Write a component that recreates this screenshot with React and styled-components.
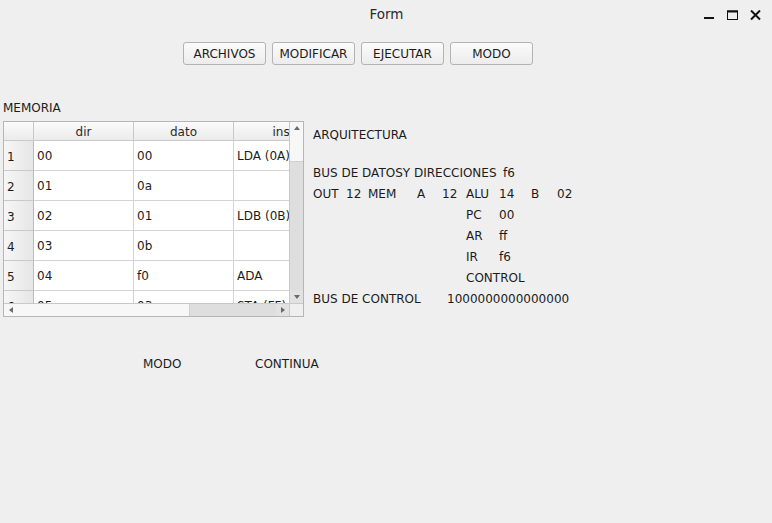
import React from 'react';
import styled, { createGlobalStyle } from 'styled-components';

const GlobalStyle = createGlobalStyle`
  html, body {
    margin: 0;
    padding: 0;
    background: #efefef;
  }
  body {
    font-family: "DejaVu Sans", "Liberation Sans", sans-serif;
    font-size: 12px;
    color: #1c1c1c;
  }
`;

const Window = styled.div`
  width: 772px;
  height: 523px;
  background: #efefef;
  display: flex;
  flex-direction: column;
  overflow: hidden;
`;

const TitleBar = styled.div`
  height: 28px;
  display: grid;
  grid-template-columns: 1fr auto 1fr;
  align-items: center;
`;

const Title = styled.div`
  grid-column: 2;
  font-size: 13.5px;
  color: #2a2a2a;
  padding-left: 1px;
`;

const WinControls = styled.div`
  justify-self: end;
  display: flex;
  align-items: center;
  gap: 12px;
  padding-right: 11px;
  padding-top: 2px;
`;

const Toolbar = styled.div`
  display: flex;
  gap: 6px;
  padding: 14px 0 0 183px;
`;

const Button = styled.button`
  width: 83px;
  height: 23px;
  box-sizing: border-box;
  border: 1px solid #b3b3b3;
  border-radius: 3px;
  background: linear-gradient(#fbfbfb, #ececec);
  font-family: inherit;
  font-size: 12px;
  color: #1c1c1c;
  padding: 0;
`;

const SectionLabel = styled.div`
  margin-top: 36px;
  padding-left: 3px;
  line-height: 14px;
`;

const MainRow = styled.div`
  display: flex;
  align-items: flex-start;
  gap: 9px;
  margin-top: 6px;
  padding-left: 3px;
`;

const TableFrame = styled.div`
  width: 301px;
  height: 196px;
  box-sizing: border-box;
  border: 1px solid #b6b6b6;
  background: #ffffff;
  display: grid;
  grid-template-columns: 285px 14px;
  grid-template-rows: 181px 13px;
`;

const Viewport = styled.div`
  overflow: hidden;
`;

const Grid = styled.div`
  display: grid;
  grid-template-columns: 30px 100px 100px 144px;
  grid-auto-rows: 30px;
  grid-template-rows: 19px;
  width: 374px;
`;

const HeadCell = styled.div`
  box-sizing: border-box;
  border-right: 1px solid #c9c9c9;
  border-bottom: 1px solid #c9c9c9;
  background: linear-gradient(#fbfbfb, #ebebeb);
  display: flex;
  align-items: center;
  justify-content: center;
  padding-top: 1px;
  color: #2a2a2a;
  white-space: nowrap;
`;

const RowHead = styled.div`
  box-sizing: border-box;
  border-right: 1px solid #bdbdbd;
  border-bottom: 1px solid #c9c9c9;
  background: linear-gradient(90deg, #f6f6f6, #e6e6e6);
  display: flex;
  align-items: center;
  padding: 3px 0 0 3px;
`;

const Cell = styled.div`
  box-sizing: border-box;
  border-right: 1px solid #d3d3d3;
  border-bottom: 1px solid #d3d3d3;
  display: flex;
  align-items: center;
  padding: 1px 0 0 3px;
  white-space: nowrap;
  overflow: hidden;
`;

const VScroll = styled.div`
  border-left: 1px solid #c9c9c9;
  display: grid;
  grid-template-rows: 12px 28px 1fr 12px;
  background: #dedede;
`;

const HScroll = styled.div`
  border-top: 1px solid #c9c9c9;
  display: grid;
  grid-template-columns: 13px 173px 1fr 13px;
  background: #dedede;
`;

const Arrow = styled.div`
  display: flex;
  align-items: center;
  justify-content: center;
  background: ${p => (p.$light ? '#f7f7f7' : '#e2e2e2')};
`;

const Thumb = styled.div`
  background: #f7f7f7;
  ${p => (p.$vertical ? 'border-bottom: 1px solid #d0d0d0;' : 'border-right: 1px solid #d0d0d0;')}
`;

const Corner = styled.div`
  border-top: 1px solid #c9c9c9;
  border-left: 1px solid #c9c9c9;
  background: #efefef;
`;

const Panel = styled.div`
  padding-top: 4px;
  display: flex;
  flex-direction: column;
`;

const Heading = styled.div`
  line-height: 21px;
  margin-bottom: 16px;
`;

const RegGrid = styled.div`
  display: grid;
  grid-template-columns: 33px 22px 49px 25px 24px 33px 32px 26px auto;
  grid-auto-rows: 21px;
  align-items: center;
  white-space: nowrap;
`;

const Wide = styled.div`
  grid-column: 1 / -1;
  display: flex;
`;

const WideLabel = styled.span`
  width: ${p => p.$w}px;
`;

const Reg = styled.span`
  grid-column: ${p => p.$col};
`;

const BottomRow = styled.div`
  display: grid;
  grid-template-columns: 112px auto;
  margin-top: 40px;
  padding-left: 143px;
  line-height: 14px;
`;

const Tri = ({ dir }) => {
  const pts = {
    up: '0,4 3,0 6,4',
    down: '0,0 6,0 3,4',
    left: '4,0 4,6 0,3',
    right: '0,0 4,3 0,6',
  }[dir];
  const vert = dir === 'up' || dir === 'down';
  return (
    <svg width={vert ? 6 : 4} height={vert ? 4 : 6}>
      <polygon points={pts} fill="#6a6a6a" />
    </svg>
  );
};

const rows = [
  ['00', '00', 'LDA (0A)'],
  ['01', '0a', ''],
  ['02', '01', 'LDB (0B)'],
  ['03', '0b', ''],
  ['04', 'f0', 'ADA'],
  ['05', '03', 'STA (FF)'],
];

export default function App() {
  return (
    <Window>
      <GlobalStyle />
      <TitleBar>
        <Title>Form</Title>
        <WinControls>
          <svg width="11" height="11" viewBox="0 0 11 11">
            <rect x="0" y="7" width="10" height="2" fill="#111" />
          </svg>
          <svg width="11" height="11" viewBox="0 0 11 11">
            <rect x="0.5" y="1" width="10" height="8.5" fill="none" stroke="#111" strokeWidth="1" />
            <rect x="0" y="0.5" width="11" height="2" fill="#111" />
          </svg>
          <svg width="11" height="11" viewBox="0 0 11 11">
            <path d="M1 0.5 L10 9.5 M10 0.5 L1 9.5" stroke="#111" strokeWidth="2" />
          </svg>
        </WinControls>
      </TitleBar>

      <Toolbar>
        <Button>ARCHIVOS</Button>
        <Button>MODIFICAR</Button>
        <Button>EJECUTAR</Button>
        <Button>MODO</Button>
      </Toolbar>

      <SectionLabel>MEMORIA</SectionLabel>

      <MainRow>
        <TableFrame>
          <Viewport>
            <Grid>
              <HeadCell />
              <HeadCell>dir</HeadCell>
              <HeadCell>dato</HeadCell>
              <HeadCell>instruccion</HeadCell>
              {rows.map((r, i) => (
                <React.Fragment key={i}>
                  <RowHead>{i + 1}</RowHead>
                  <Cell>{r[0]}</Cell>
                  <Cell>{r[1]}</Cell>
                  <Cell>{r[2]}</Cell>
                </React.Fragment>
              ))}
            </Grid>
          </Viewport>
          <VScroll>
            <Arrow $light><Tri dir="up" /></Arrow>
            <Thumb $vertical />
            <div />
            <Arrow><Tri dir="down" /></Arrow>
          </VScroll>
          <HScroll>
            <Arrow $light><Tri dir="left" /></Arrow>
            <Thumb />
            <div />
            <Arrow><Tri dir="right" /></Arrow>
          </HScroll>
          <Corner />
        </TableFrame>

        <Panel>
          <Heading>ARQUITECTURA</Heading>
          <RegGrid>
            <Wide>
              <WideLabel $w={190}>BUS DE DATOSY DIRECCIONES</WideLabel>
              <span>f6</span>
            </Wide>
            <Reg $col={1}>OUT</Reg>
            <Reg $col={2}>12</Reg>
            <Reg $col={3}>MEM</Reg>
            <Reg $col={4}>A</Reg>
            <Reg $col={5}>12</Reg>
            <Reg $col={6}>ALU</Reg>
            <Reg $col={7}>14</Reg>
            <Reg $col={8}>B</Reg>
            <Reg $col={9}>02</Reg>
            <Reg $col={6}>PC</Reg>
            <Reg $col={7}>00</Reg>
            <Reg $col={6}>AR</Reg>
            <Reg $col={7}>ff</Reg>
            <Reg $col={6}>IR</Reg>
            <Reg $col={7}>f6</Reg>
            <Reg $col="6 / span 4">CONTROL</Reg>
            <Wide>
              <WideLabel $w={134}>BUS DE CONTROL</WideLabel>
              <span>1000000000000000</span>
            </Wide>
          </RegGrid>
        </Panel>
      </MainRow>

      <BottomRow>
        <span>MODO</span>
        <span>CONTINUA</span>
      </BottomRow>
    </Window>
  );
}
